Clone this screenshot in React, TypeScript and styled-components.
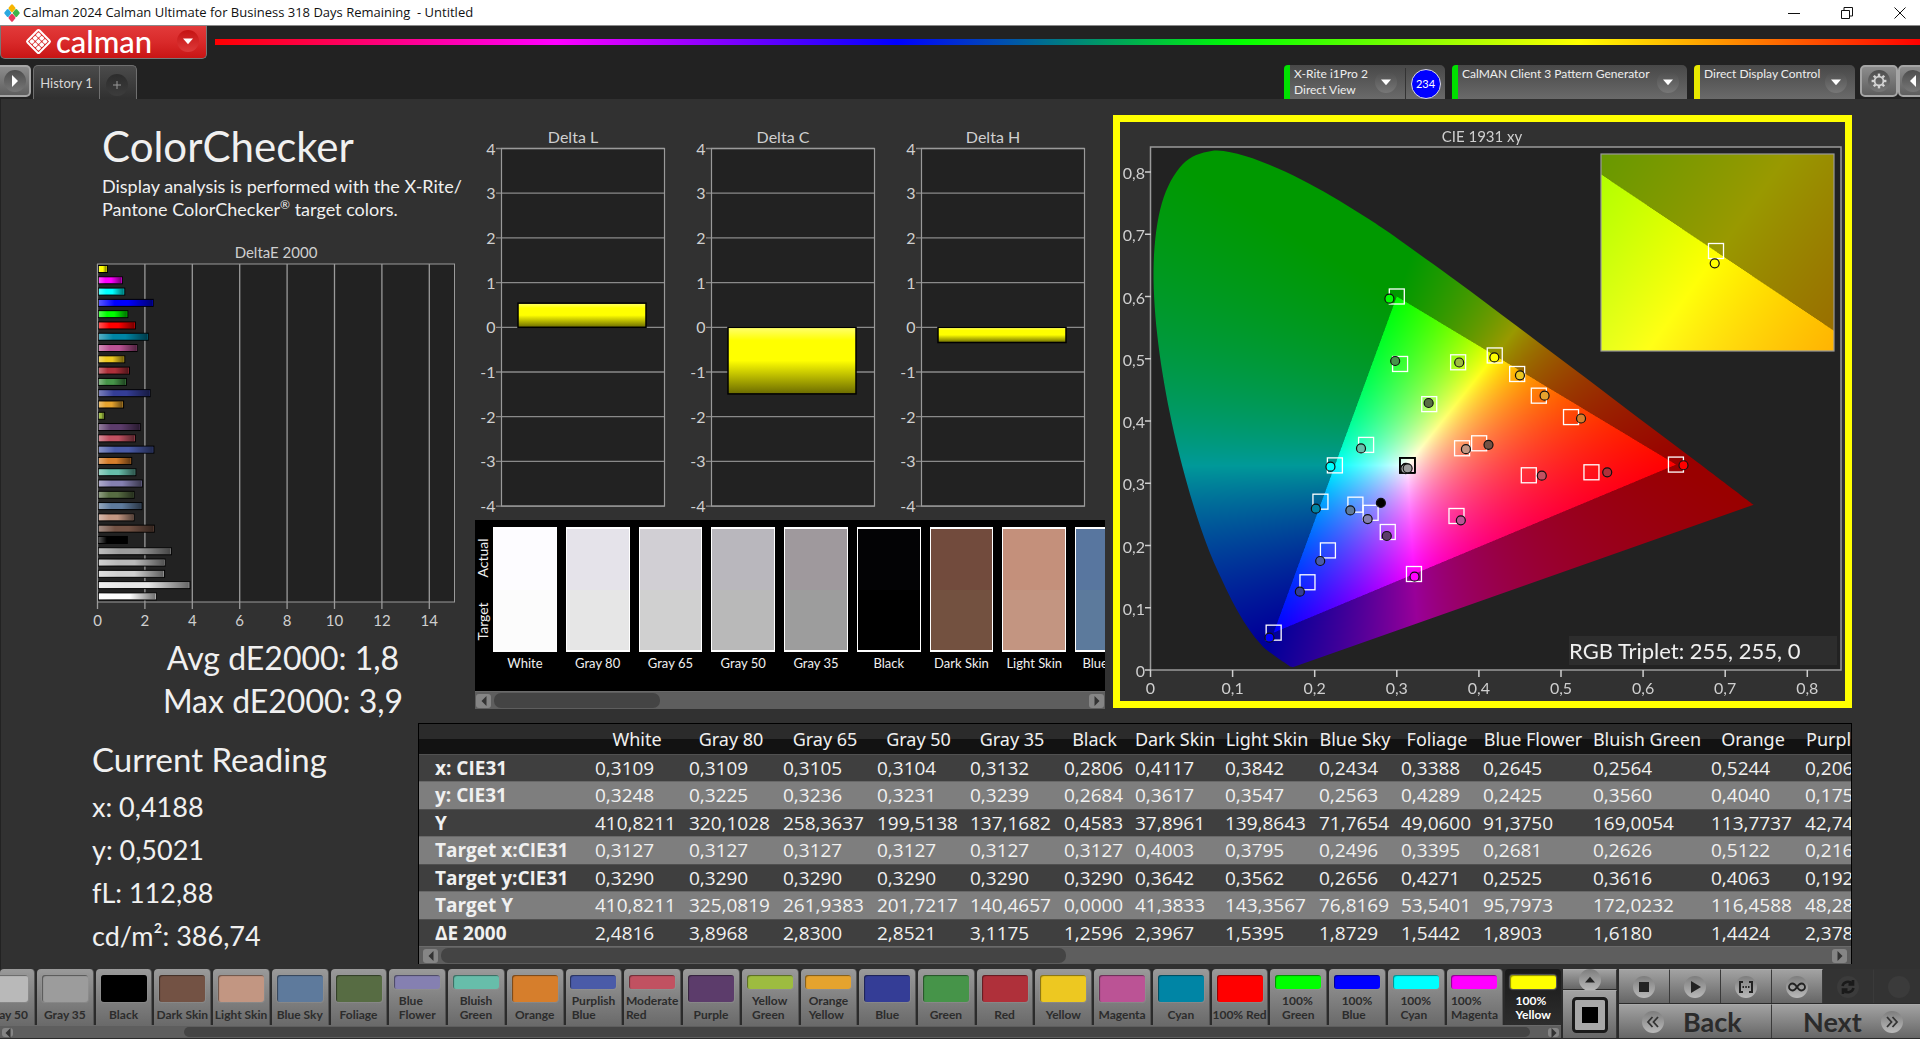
import React, { useLayoutEffect, useRef } from "react";
import styled, { createGlobalStyle, css } from "styled-components";

const GlobalStyle = createGlobalStyle`
  *, *::before, *::after { box-sizing: border-box; }
  body { margin: 0; background: #313131; font-family: Lato, "Open Sans", sans-serif; color: #f0f0f0; }
  button { font: inherit; color: inherit; padding: 0; margin: 0; border: 0; background: none; }
  h1, h2, p, figure { margin: 0; font-weight: 400; }
`;

/* ---------- data ---------- */

type Patch = {
  name: string;
  lines: string[];
  color: string;
  actual: [number, number];
  target: [number, number];
  dE: number;
};

const patch = (
  name: string,
  color: string,
  ax: number,
  ay: number,
  tx: number,
  ty: number,
  dE: number,
  lines: string[] = [name],
): Patch => ({ name, lines, color, actual: [ax, ay], target: [tx, ty], dE });

const patches: Patch[] = [
  patch("White", "#fdfdfd", 0.3109, 0.3248, 0.3127, 0.329, 2.4816),
  patch("Gray 80", "#e6e6e6", 0.3109, 0.3225, 0.3127, 0.329, 3.8968),
  patch("Gray 65", "#d0d0d0", 0.3105, 0.3236, 0.3127, 0.329, 2.83),
  patch("Gray 50", "#b9b9b9", 0.3104, 0.3231, 0.3127, 0.329, 2.8521),
  patch("Gray 35", "#9c9c9c", 0.3132, 0.3239, 0.3127, 0.329, 3.1175),
  patch("Black", "#000000", 0.2806, 0.2684, 0.3127, 0.329, 1.2596),
  patch("Dark Skin", "#735244", 0.4117, 0.3617, 0.4003, 0.3642, 2.3967),
  patch("Light Skin", "#c29682", 0.3842, 0.3547, 0.3795, 0.3562, 1.5395),
  patch("Blue Sky", "#5e7a9c", 0.2434, 0.2563, 0.2496, 0.2656, 1.8729),
  patch("Foliage", "#576c43", 0.3388, 0.4289, 0.3395, 0.4271, 1.5442),
  patch("Blue Flower", "#8580b1", 0.2645, 0.2425, 0.2681, 0.2525, 1.8903, ["Blue", "Flower"]),
  patch("Bluish Green", "#67bdaa", 0.2564, 0.356, 0.2626, 0.3616, 1.618, ["Bluish", "Green"]),
  patch("Orange", "#d67e2c", 0.5244, 0.404, 0.5122, 0.4063, 1.4424),
  patch("Purplish Blue", "#4a5ba8", 0.2067, 0.1751, 0.2161, 0.1921, 2.378, ["Purplish", "Blue"]),
  patch("Moderate Red", "#c15161", 0.4766, 0.3121, 0.4608, 0.3128, 1.6, ["Moderate", "Red"]),
  patch("Purple", "#5c3c6b", 0.2878, 0.2153, 0.289, 0.2217, 1.8),
  patch("Yellow Green", "#9dbc40", 0.376, 0.494, 0.3747, 0.4943, 0.3, ["Yellow", "Green"]),
  patch("Orange Yellow", "#e5a32e", 0.48, 0.4407, 0.473, 0.4407, 1.1, ["Orange", "Yellow"]),
  patch("Blue", "#343d96", 0.1819, 0.1259, 0.1912, 0.1409, 2.22),
  patch("Green", "#469449", 0.298, 0.4964, 0.304, 0.4916, 1.22),
  patch("Red", "#af303a", 0.5563, 0.3176, 0.5371, 0.3176, 1.35),
  patch("Yellow", "#edc821", 0.45, 0.4734, 0.4466, 0.4755, 1.15),
  patch("Magenta", "#bb5395", 0.378, 0.2405, 0.3727, 0.2474, 1.67),
  patch("Cyan", "#0085a5", 0.2014, 0.2592, 0.207, 0.2704, 2.14),
  patch("100% Red", "#ff0000", 0.6492, 0.3289, 0.64, 0.33, 1.6),
  patch("100% Green", "#00ff00", 0.291, 0.5965, 0.3, 0.6, 1.28, ["100%", "Green"]),
  patch("100% Blue", "#0000ff", 0.1449, 0.0519, 0.15, 0.06, 2.35, ["100%", "Blue"]),
  patch("100% Cyan", "#00ffff", 0.2192, 0.3266, 0.2246, 0.3287, 1.15, ["100%", "Cyan"]),
  patch("100% Magenta", "#ff00ff", 0.3216, 0.15, 0.3209, 0.1542, 1.05, ["100%", "Magenta"]),
  patch("100% Yellow", "#ffff00", 0.4188, 0.5021, 0.4193, 0.5053, 0.42, ["100%", "Yellow"]),
];

const stripColors: [string, string, string][] = [
  ["White", "#fdfcff", "#fcfcfc"],
  ["Gray 80", "#e5e3ea", "#e6e6e6"],
  ["Gray 65", "#d1cfd4", "#d0d0d0"],
  ["Gray 50", "#b9b7bd", "#b9b9b9"],
  ["Gray 35", "#9f999d", "#9d9d9d"],
  ["Black", "#030305", "#000000"],
  ["Dark Skin", "#724b3d", "#735140"],
  ["Light Skin", "#c4907b", "#c39581"],
  ["Blue Sky", "#58769f", "#5c7a9c"],
];

const columns: [string, number][] = [
  ["White", 94], ["Gray 80", 94], ["Gray 65", 94], ["Gray 50", 93], ["Gray 35", 94],
  ["Black", 71], ["Dark Skin", 90], ["Light Skin", 94], ["Blue Sky", 82], ["Foliage", 82],
  ["Blue Flower", 110], ["Bluish Green", 118], ["Orange", 94], ["Purplish Blue", 124],
];

const rows: [string, string[]][] = [
  ["x: CIE31", ["0,3109", "0,3109", "0,3105", "0,3104", "0,3132", "0,2806", "0,4117", "0,3842", "0,2434", "0,3388", "0,2645", "0,2564", "0,5244", "0,2067"]],
  ["y: CIE31", ["0,3248", "0,3225", "0,3236", "0,3231", "0,3239", "0,2684", "0,3617", "0,3547", "0,2563", "0,4289", "0,2425", "0,3560", "0,4040", "0,1751"]],
  ["Y", ["410,8211", "320,1028", "258,3637", "199,5138", "137,1682", "0,4583", "37,8961", "139,8643", "71,7654", "49,0600", "91,3750", "169,0054", "113,7737", "42,7412"]],
  ["Target x:CIE31", ["0,3127", "0,3127", "0,3127", "0,3127", "0,3127", "0,3127", "0,4003", "0,3795", "0,2496", "0,3395", "0,2681", "0,2626", "0,5122", "0,2161"]],
  ["Target y:CIE31", ["0,3290", "0,3290", "0,3290", "0,3290", "0,3290", "0,3290", "0,3642", "0,3562", "0,2656", "0,4271", "0,2525", "0,3616", "0,4063", "0,1921"]],
  ["Target Y", ["410,8211", "325,0819", "261,9383", "201,7217", "140,4657", "0,0000", "41,3833", "143,3567", "76,8169", "53,5401", "95,7973", "172,0232", "116,4588", "48,2810"]],
  ["ΔE 2000", ["2,4816", "3,8968", "2,8300", "2,8521", "3,1175", "1,2596", "2,3967", "1,5395", "1,8729", "1,5442", "1,8903", "1,6180", "1,4424", "2,3781"]],
];

/* ---------- window title ---------- */

const TitleBar = styled.div`
  display: flex;
  align-items: center;
  height: 26px;
  padding-left: 4px;
  background: #fff;
  border-bottom: 1px solid #8a8a8a;
  color: #111;
  font: 13px/25px "Open Sans", sans-serif;
`;
const TitleText = styled.span`
  flex: 1;
  padding-left: 3px;
  white-space: pre;
`;
const WindowButton = styled.button`
  display: grid;
  place-items: center;
  width: 53px;
  height: 25px;
  padding-left: 13px;
`;

/* ---------- header ---------- */

const Header = styled.header`
  background: #222;
  overflow: hidden;
`;
const BrandRow = styled.div`
  display: flex;
  align-items: flex-start;
  gap: 8px;
  height: 39px;
`;
const BrandButton = styled.button`
  display: flex;
  align-items: center;
  width: 207px;
  height: 33px;
  padding: 0 7px 2px 24px;
  background: linear-gradient(#e23a3a, #d92a2a 50%, #c91515);
  border: 1px solid #777;
  border-top: 0;
  border-radius: 0 0 5px 5px;
  color: #fff;
`;
const BrandName = styled.span`
  flex: 1;
  padding-left: 4px;
  text-align: left;
  font: 500 31px/30px Lato, sans-serif;
`;
const Rainbow = styled.div`
  flex: 1;
  height: 6px;
  margin-top: 13px;
  background: linear-gradient(90deg, #f00, #f0f, #00f, #0f0, #ff0, #f00);
`;
const TabRow = styled.div`
  display: flex;
  height: 34px;
`;
const Spacer = styled.div`
  flex: 1;
`;
const Knob = styled.span<{ $tone?: "red" | "dark" | "flat" | "light" }>`
  display: grid;
  place-items: center;
  flex: none;
  width: 22px;
  height: 22px;
  border-radius: 50%;
  background: linear-gradient(#4d4d4d, #777);
  ${(p) => p.$tone === "red" && css`background: linear-gradient(#c51212, #dd3a3a);`}
  ${(p) => p.$tone === "dark" && css`background: linear-gradient(#2c2c2c, #3c3c3c);`}
  ${(p) => p.$tone === "flat" && css`background: #3b3b3b;`}
  ${(p) => p.$tone === "light" && css`background: linear-gradient(#7d7d7d, #bababa);`}
`;
const EdgeButton = styled.button<{ $side?: "left" | "right" }>`
  display: grid;
  place-items: center;
  flex: none;
  width: ${(p) => (p.$side === "left" ? 31 : p.$side === "right" ? 30 : 38)}px;
  height: 32px;
  background: linear-gradient(#8c8c8c, #5f5f5f);
  border: 2px solid #a5a5a5;
  border-radius: 5px;
  ${(p) => p.$side === "left" && css`border-left: 0; border-radius: 0 5px 5px 0;`}
  ${(p) => p.$side === "right" && css`margin-right: -8px;`}
`;
const Tab = styled.div`
  display: flex;
  margin-left: 2px;
  border: 1px solid #6f6f6f;
  border-bottom: 0;
  border-radius: 5px 5px 0 0;
  background: linear-gradient(#4b4b4b, #303030);
`;
const TabLabel = styled.button`
  width: 66px;
  border-right: 1px solid #6f6f6f;
  color: #d8d8d8;
  font-size: 13px;
`;
const TabAdd = styled.button`
  display: grid;
  place-items: center;
  width: 36px;
  padding: 4px 2px 0 0;
`;
const Device = styled.div<{ $width: number; $accent: string }>`
  display: flex;
  width: ${(p) => p.$width}px;
  margin-right: 7px;
  border-left: 6px solid ${(p) => p.$accent};
  border-radius: 4px 5px 0 0;
  background: linear-gradient(#484848, #6a6a6a);
  overflow: hidden;
  &:last-of-type { margin-right: 5px; }
`;
const DeviceMenu = styled.button`
  display: flex;
  flex: 1;
  padding: 1px 8px 0 4px;
  text-align: left;
  color: #eee;
  font-size: 12px;
  line-height: 16px;
  white-space: nowrap;
  ${Knob} { margin: 5px 0 0 auto; }
`;
const Meter = styled.div`
  display: grid;
  place-items: center;
  width: 40px;
  margin-top: 3px;
  border-left: 1px solid #333;
`;
const MeterCount = styled.span`
  display: grid;
  place-items: center;
  width: 30px;
  height: 30px;
  border: 1px solid #ddd;
  border-radius: 50%;
  background: #00f;
  color: #fff;
  font-size: 11px;
`;

/* ---------- workspace ---------- */

const Workspace = styled.main`
  padding-right: 68px;
  background: #313131;
  border-left: 1px solid #222;
`;
const UpperRow = styled.section`
  display: grid;
  grid-template-columns: 467px minmax(0, 637fr) minmax(0, 747fr);
  min-height: 624px;
`;
const Intro = styled.div`
  padding-top: 22px;
`;
const PageTitle = styled.h1`
  padding-left: 101px;
  font-size: 42px;
  line-height: 50px;
`;
const PageText = styled.p`
  margin-top: 4px;
  padding-left: 101px;
  font-size: 18px;
  line-height: 23px;
  white-space: nowrap;
`;
const Mark = styled.sup`
  font-size: 12px;
  line-height: 0;
`;
const Drawing = styled.svg`
  display: block;
  width: 100%;
  font-family: Lato, sans-serif;
`;
const BarFigure = styled.figure`
  margin-top: 19px;
`;
const Summary = styled.p`
  padding-left: 97px;
  text-align: center;
  font-size: 32px;
  line-height: 43px;
`;
const MiddleColumn = styled.div`
  display: flex;
  flex-direction: column;
  gap: 5px;
  padding: 16px 0 0;
`;
const DeltaRow = styled.div`
  display: grid;
  grid-template-columns: repeat(3, 1fr);
  padding-right: 7px;
`;
const Strip = styled.div`
  margin-left: 7px;
  background: #000;
`;
const StripBody = styled.div`
  display: flex;
  height: 171px;
  padding-top: 7px;
  overflow: hidden;
`;
const StripAxis = styled.div`
  display: flex;
  flex: none;
  flex-direction: column;
  width: 18px;
  height: 125px;
`;
const StripAxisLabel = styled.span`
  flex: 1;
  writing-mode: vertical-rl;
  transform: rotate(180deg);
  text-align: center;
  font-size: 14px;
  line-height: 16px;
`;
const Swatches = styled.div`
  display: flex;
  flex: 1;
  gap: 9px;
  min-width: 0;
  overflow: hidden;
`;
const SwatchItem = styled.div`
  flex: none;
  width: calc(100% * 4 / 39 + 1px);
  text-align: center;
  font-size: 13px;
  line-height: 22px;
  white-space: nowrap;
`;
const SwatchBox = styled.div<{ $actual: string; $target: string }>`
  height: 125px;
  border: 1px solid #fff;
  border-width: 2px 1px;
  background: linear-gradient(${(p) => p.$actual} 50%, ${(p) => p.$target} 50%);
`;

const Scroll = styled.div<{ $height: number; $pad: number }>`
  display: flex;
  align-items: center;
  height: ${(p) => p.$height}px;
  padding: 0 ${(p) => p.$pad}px;
  background: #5e5e5e;
  border-top: 1px solid #6a6a6a;
`;
const ScrollArrow = styled.button<{ $height: number }>`
  display: grid;
  place-items: center;
  flex: none;
  width: ${(p) => (p.$height > 14 ? 15 : 11)}px;
  height: ${(p) => p.$height - 4}px;
  border-radius: 3px;
  background: #858585;
`;
const ScrollTrack = styled.div`
  flex: 1;
  height: 100%;
  padding: 1px 3px;
`;
const ScrollThumb = styled.div<{ $start: number; $size: number }>`
  width: ${(p) => p.$size}%;
  height: 100%;
  margin-left: ${(p) => p.$start}%;
  border-radius: 7px;
  background: #444;
`;

const CieFrame = styled.figure`
  display: grid;
  align-self: start;
  margin: 16px 0 0 8px;
  border: 7px solid #ff0;
  background: #313131;
  & > * { grid-area: 1 / 1; min-width: 0; }
`;
const CieCanvas = styled.canvas`
  display: block;
  width: 100%;
`;

/* ---------- readings and data table ---------- */

const LowerRow = styled.section`
  display: grid;
  grid-template-columns: 417px minmax(0, 1fr);
  min-height: 246px;
`;
const Reading = styled.div`
  padding: 14px 0 0 91px;
`;
const ReadingTitle = styled.h2`
  font-size: 33px;
  line-height: 44px;
`;
const ReadingList = styled.div`
  margin-top: 4px;
  font-size: 27px;
  line-height: 43px;
`;
const TablePanel = styled.div`
  align-self: start;
  border: 1px solid #000;
  border-bottom: 0;
`;
const TableClip = styled.div`
  overflow: hidden;
`;
const DataTable = styled.table`
  width: 1505px;
  table-layout: fixed;
  border-collapse: collapse;
  font: 19px/24px "Open Sans", sans-serif;
  white-space: nowrap;
`;
const ColumnHead = styled.th`
  height: 30px;
  padding: 0;
  background: linear-gradient(#2b2b2b 50%, #121212 50%);
  font: 400 18px/24px "Noto Sans", sans-serif;
  text-align: center;
`;
const DataRow = styled.tr<{ $light: boolean }>`
  height: ${(p) => (p.$light ? 28 : 27)}px;
  background: ${(p) => (p.$light ? "#7e7e7e" : "#3f3f3f")};
  border-top: 1px solid ${(p) => (p.$light ? "#696969" : "#505050")};
`;
const RowHead = styled.th`
  padding: 0 0 0 16px;
  text-align: left;
  font-weight: 700;
`;
const Cell = styled.td`
  padding: 0 0 0 5px;
`;

/* ---------- bottom bar ---------- */

const Footer = styled.footer`
  display: flex;
  height: 70px;
  padding-bottom: 1px;
  background: #2b2b2b;
`;
const PatchPane = styled.div`
  flex: 1;
  min-width: 0;
`;
const PatchList = styled.div`
  display: flex;
  gap: 2px;
  height: 56px;
`;
const PatchButton = styled.button<{ $active?: boolean; $cut?: boolean }>`
  display: flex;
  flex: 1 1 0;
  flex-direction: column;
  align-items: center;
  min-width: 0;
  padding: 6px 0 3px;
  border-radius: 4px 4px 0 0;
  background: linear-gradient(#9a9a9a, #6a6a6a);
  border-right: 1px solid #555;
  color: #2c2c2c;
  font: 700 12px/14px Lato, sans-serif;
  white-space: nowrap;
  ${(p) => p.$cut && css`flex: 0 0 35px; overflow: hidden; align-items: flex-end; padding-right: 6px;`}
  ${(p) => p.$active && css`background: linear-gradient(#1a1a1a, #2d2d2d); border-right: 0; color: #fff;`}
`;
const PatchColor = styled.span<{ $color: string; $short: boolean }>`
  flex: none;
  width: 46px;
  height: ${(p) => (p.$short ? 14 : 27)}px;
  border-radius: 3px;
  background: ${(p) => p.$color};
  box-shadow: inset 1px 1px 1px rgba(0, 0, 0, 0.45), 0 0 1px 1px rgba(150, 150, 150, 0.5);
`;
const PatchLabel = styled.span`
  margin-top: auto;
  text-align: left;
  white-space: pre;
`;
const Panel = styled.button<{ $dim?: boolean; $height: number }>`
  display: flex;
  align-items: center;
  justify-content: center;
  height: ${(p) => p.$height}px;
  background: linear-gradient(#a2a2a2, #666);
  border-right: 1px solid #3a3a3a;
  border-top: 1px solid #aaa;
  color: #2b2b2b;
  ${(p) => p.$dim && css`background: #333; border-top-color: #333;`}
`;
const SideTools = styled.div`
  display: flex;
  flex-direction: column;
  gap: 1px;
  width: 54px;
  margin: 0 2px;
`;
const Transport = styled.div`
  display: grid;
  grid-template-columns: repeat(6, 51px);
  grid-template-rows: 34px 34px;
  row-gap: 1px;
  width: 301px;
  overflow: hidden;
`;
const NavButton = styled(Panel)<{ $inset: number }>`
  grid-column: span 3;
  justify-content: flex-start;
  gap: 19px;
  padding-left: ${(p) => p.$inset}px;
  font: 700 27px/30px Lato, sans-serif;
`;

/* ---------- pieces ---------- */

const Triangle = ({ dir, color = "#fff", size = 6 }: { dir: "up" | "down" | "left" | "right"; color?: string; size?: number }) => {
  const points = { down: "0,3 12,3 6,10", up: "0,9 12,9 6,2", left: "9,0 9,12 3,6", right: "3,0 3,12 9,6" }[dir];
  return (
    <svg width={size * 2} height={size * 2} viewBox="0 0 12 12" aria-hidden="true">
      <polygon points={points} fill={color} />
    </svg>
  );
};

const ScrollBar = ({ height, start, size, pad = 1 }: { height: number; start: number; size: number; pad?: number }) => (
  <Scroll $height={height} $pad={pad}>
    <ScrollArrow $height={height} aria-label="Scroll left"><Triangle dir="left" color="#333" size={5} /></ScrollArrow>
    <ScrollTrack><ScrollThumb $start={start} $size={size} /></ScrollTrack>
    <ScrollArrow $height={height} aria-label="Scroll right"><Triangle dir="right" color="#333" size={5} /></ScrollArrow>
  </Scroll>
);

const AppIcon = () => (
  <svg width="16" height="18" viewBox="1 1 18 18" preserveAspectRatio="none" aria-hidden="true">
    <g transform="rotate(45 10 10)">
      <rect x="3.5" y="3.5" width="6.3" height="6.3" rx="1.5" fill="#f7b500" />
      <rect x="10.2" y="3.5" width="6.3" height="6.3" rx="1.5" fill="#3db54a" />
      <rect x="3.5" y="10.2" width="6.3" height="6.3" rx="1.5" fill="#2aa9e0" />
      <rect x="10.2" y="10.2" width="6.3" height="6.3" rx="1.5" fill="#e8395b" />
    </g>
  </svg>
);

const BrandMark = () => (
  <svg width="27" height="27" viewBox="0 0 27 27" aria-hidden="true">
    <g transform="rotate(45 13.5 13.5)">
      <rect x="5" y="5" width="17" height="17" rx="1.5" fill="none" stroke="#fff" strokeWidth="2" />
      {[0, 1, 2].map((i) =>
        [0, 1, 2].map((j) => (
          <rect key={`${i}${j}`} x={6.9 + i * 4.6} y={6.9 + j * 4.6} width="4" height="4" rx="1" fill="#fff" />
        )),
      )}
    </g>
  </svg>
);

const GearIcon = () => (
  <svg width="16" height="16" viewBox="0 0 16 16" aria-hidden="true" fill="none" stroke="#d4d4d4">
    <circle cx="8" cy="8" r="4.4" strokeWidth="1.8" />
    {[0, 45, 90, 135, 180, 225, 270, 315].map((a) => (
      <line key={a} x1="8" y1="0.6" x2="8" y2="3" strokeWidth="2.4" transform={`rotate(${a} 8 8)`} />
    ))}
  </svg>
);

/* ---------- DeltaE 2000 bars ---------- */

const DeltaEChart = () => {
  const left = 96.5;
  const unit = 23.7;
  const bars = [...patches].reverse();
  return (
    <Drawing viewBox="0 0 467 396" role="img" aria-label="DeltaE 2000">
      <defs>
        <linearGradient id="shade" x1="0" x2="1" y1="0" y2="0">
          <stop offset="0" stopColor="#fff" stopOpacity="0.35" />
          <stop offset="0.3" stopColor="#fff" stopOpacity="0" />
          <stop offset="0.55" stopColor="#000" stopOpacity="0" />
          <stop offset="1" stopColor="#000" stopOpacity="0.55" />
        </linearGradient>
      </defs>
      <text x="275" y="18" fontSize="15" textAnchor="middle" fill="#cfcfcf">DeltaE 2000</text>
      <rect x={left} y="24" width="357" height="338" fill="#222" stroke="#9a9a9a" />
      {[0, 2, 4, 6, 8, 10, 12, 14].map((v) => (
        <g key={v}>
          <line x1={left + v * unit} x2={left + v * unit} y1="24" y2="369" stroke="#9a9a9a" strokeWidth="1.3" />
          <text x={left + v * unit} y="386" fontSize="15" textAnchor="middle" fill="#cfcfcf">{v}</text>
        </g>
      ))}
      {bars.map((b, i) => (
        <g key={b.name}>
          <rect x={left + 1} y={25.5 + i * 11.29} width={b.dE * unit - 1} height="7" fill={b.color} stroke="#000" />
          <rect x={left + 1} y={26 + i * 11.29} width={b.dE * unit - 2} height="6" fill="url(#shade)" />
        </g>
      ))}
    </Drawing>
  );
};

/* ---------- Delta L / C / H ---------- */

const DeltaChart = ({ title, value }: { title: string; value: number }) => {
  const unit = 44.7;
  const zero = 33.5 + 4 * unit;
  const top = value > 0 ? zero - value * unit : zero;
  return (
    <Drawing viewBox="0 0 210 400" role="img" aria-label={title}>
      <defs>
        <linearGradient id="yellowBar" x1="0" x2="0" y1="0" y2="1">
          <stop offset="0" stopColor="#ffff70" />
          <stop offset="0.2" stopColor="#ffff00" />
          <stop offset="0.5" stopColor="#ffff00" />
          <stop offset="1" stopColor="#6b6b00" />
        </linearGradient>
      </defs>
      <text x="105" y="28" fontSize="16" textAnchor="middle" fill="#cfcfcf">{title}</text>
      <rect x="33.5" y="33.5" width="163" height={8 * unit} fill="#222" />
      {[4, 3, 2, 1, 0, -1, -2, -3, -4].map((v) => (
        <g key={v}>
          <line x1="28" x2="196.5" y1={zero - v * unit} y2={zero - v * unit} stroke="#8a8a8a" strokeWidth="1.3" />
          <text x="27.5" y={zero - v * unit + 6} fontSize="16" textAnchor="end" fill="#cfcfcf">{v}</text>
        </g>
      ))}
      <rect x="33.5" y="33.5" width="163" height={8 * unit} fill="none" stroke="#9a9a9a" strokeWidth="1.2" />
      <rect x="50" y={top} width="128" height={Math.abs(value) * unit} fill="url(#yellowBar)" stroke="#000" strokeWidth="1.5" />
    </Drawing>
  );
};

/* ---------- CIE 1931 chromaticity ---------- */

const CIE_W = 725;
const CIE_H = 579;
const px = (x: number) => 30.5 + 821 * x;
const py = (y: number) => 548 - 622.5 * y;

const locus: [number, number][] = [
  [0.1741, 0.005], [0.1714, 0.0051], [0.1689, 0.0069], [0.1644, 0.0109], [0.1566, 0.0177], [0.144, 0.0297],
  [0.1355, 0.0399], [0.1241, 0.0578], [0.1096, 0.0868], [0.0913, 0.1327], [0.0687, 0.2007], [0.0454, 0.295],
  [0.0235, 0.4127], [0.0082, 0.5384], [0.0039, 0.6548], [0.0139, 0.7502], [0.0389, 0.812], [0.0743, 0.8338],
  [0.1142, 0.8262], [0.1547, 0.8059], [0.1929, 0.7816], [0.2296, 0.7543], [0.2658, 0.7243], [0.3016, 0.6923],
  [0.3731, 0.6245], [0.4441, 0.5547], [0.5125, 0.4866], [0.5752, 0.4242], [0.627, 0.3725], [0.6658, 0.334],
  [0.6915, 0.3083], [0.719, 0.2809], [0.7347, 0.2653],
];

const shade = (x: number, y: number): [number, number, number] => {
  const X = x / y;
  const Z = (1 - x - y) / y;
  const rgb = [
    3.2406 * X - 1.5372 - 0.4986 * Z,
    -0.9689 * X + 1.8758 + 0.0415 * Z,
    0.0557 * X - 0.204 + 1.057 * Z,
  ];
  const inside = rgb.every((c) => c >= 0);
  const peak = Math.max(...rgb);
  const level = inside ? 255 : 153;
  return rgb.map((c) => (Math.max(0, c) / peak) * level) as [number, number, number];
};

const inset = { x: 481, y: 32, w: 233, h: 197, cx: 0.4193, cy: 0.5053, span: 0.0525 };

const paintField = (
  ctx: CanvasRenderingContext2D,
  x0: number,
  y0: number,
  w: number,
  h: number,
  toXY: (i: number, j: number) => [number, number],
  clip?: () => void,
) => {
  const layer = document.createElement("canvas");
  layer.width = w;
  layer.height = h;
  const lctx = layer.getContext("2d")!;
  const image = lctx.createImageData(w, h);
  for (let j = 0; j < h; j++) {
    for (let i = 0; i < w; i++) {
      const sum = [0, 0, 0];
      for (const [di, dj] of [[0.25, 0.25], [0.75, 0.25], [0.25, 0.75], [0.75, 0.75]]) {
        const [x, y] = toXY(x0 + i + di, y0 + j + dj);
        const c = shade(x, Math.max(y, 0.001));
        for (let k = 0; k < 3; k++) sum[k] += c[k] / 4;
      }
      const o = (j * w + i) * 4;
      image.data[o] = sum[0];
      image.data[o + 1] = sum[1];
      image.data[o + 2] = sum[2];
      image.data[o + 3] = 255;
    }
  }
  lctx.putImageData(image, 0, 0);
  ctx.save();
  clip?.();
  ctx.drawImage(layer, x0, y0);
  ctx.restore();
};

const CieChart = () => {
  const ref = useRef<HTMLCanvasElement>(null);
  useLayoutEffect(() => {
    const ctx = ref.current?.getContext("2d");
    if (!ctx) return;
    ctx.fillStyle = "#222";
    ctx.fillRect(31, 25, 690, 523);
    paintField(ctx, 31, 26, 606, 522, (i, j) => [(i - 30.5) / 821, (548 - j) / 622.5], () => {
      ctx.beginPath();
      ctx.moveTo(px(locus[0][0]), py(locus[0][1]));
      for (let i = 0; i < locus.length - 1; i++) {
        const p0 = locus[Math.max(0, i - 1)];
        const p1 = locus[i];
        const p2 = locus[i + 1];
        const p3 = locus[Math.min(locus.length - 1, i + 2)];
        ctx.bezierCurveTo(
          px(p1[0] + (p2[0] - p0[0]) / 6), py(p1[1] + (p2[1] - p0[1]) / 6),
          px(p2[0] - (p3[0] - p1[0]) / 6), py(p2[1] - (p3[1] - p1[1]) / 6),
          px(p2[0]), py(p2[1]),
        );
      }
      ctx.closePath();
      ctx.clip();
    });
    paintField(ctx, inset.x, inset.y, inset.w, inset.h, (i, j) => [
      inset.cx + ((i - inset.x) / inset.w - 0.5) * inset.span,
      inset.cy - ((j - inset.y) / inset.h - 0.5) * inset.span,
    ]);
  }, []);

  return (
    <CieFrame>
      <CieCanvas ref={ref} width={CIE_W} height={CIE_H} />
      <Drawing viewBox={`0 0 ${CIE_W} ${CIE_H}`} role="img" aria-label="CIE 1931 xy">
        <text x="362" y="20" fontSize="15" textAnchor="middle" fill="#cfcfcf">CIE 1931 xy</text>
        <rect x="30.5" y="25" width="690.5" height="523" fill="none" stroke="#9a9a9a" strokeWidth="1.5" />
        {[0, 1, 2, 3, 4, 5, 6, 7, 8].map((v) => (
          <g key={v} fill="#cfcfcf" fontSize="16">
            <line x1={px(v / 10)} x2={px(v / 10)} y1="548" y2="555" stroke="#cfcfcf" strokeWidth="1.5" />
            <text x={px(v / 10)} y="572" textAnchor="middle">{v ? `0,${v}` : "0"}</text>
            <line x1="25" x2="31" y1={py(v / 10)} y2={py(v / 10)} stroke="#cfcfcf" strokeWidth="1.5" />
            <text x="25" y={py(v / 10) + 7} textAnchor="end">{v ? `0,${v}` : "0"}</text>
          </g>
        ))}
        {patches.map((p, i) => (
          <rect key={p.name} x={px(p.target[0]) - 7.5} y={py(p.target[1]) - 7.5} width="15" height="15" fill="none" stroke={i < 6 ? "#000" : "#fff"} strokeWidth="1.3" />
        ))}
        {patches.map((p) => (
          <circle key={p.name} cx={px(p.actual[0])} cy={py(p.actual[1])} r="4.5" fill={p.color} stroke="#111" strokeWidth="1.2" />
        ))}
        <rect x={inset.x} y={inset.y} width={inset.w} height={inset.h} fill="none" stroke="#9a9a9a" strokeWidth="1.2" />
        <rect x="588.5" y="121.5" width="15" height="15" fill="none" stroke="#fff" strokeWidth="1.3" />
        <circle cx="594.7" cy="141.3" r="4.5" fill="#ff0" stroke="#111" strokeWidth="1.2" />
        <rect x="449" y="514" width="268" height="29" fill="#2d2d2d" />
        <text x="449" y="537" fontSize="22" fill="#f0f0f0">RGB Triplet: 255, 255, 0</text>
      </Drawing>
    </CieFrame>
  );
};

/* ---------- page ---------- */

export default function App() {
  return (
    <>
      <GlobalStyle />
      <TitleBar>
        <AppIcon />
        <TitleText>{"Calman 2024 Calman Ultimate for Business 318 Days Remaining  - Untitled"}</TitleText>
        <WindowButton aria-label="Minimize"><svg width="12" height="12" stroke="#111"><path d="M0 6.5H12" /></svg></WindowButton>
        <WindowButton aria-label="Restore"><svg width="12" height="12" fill="none" stroke="#111"><path d="M.5 3.5h8v8h-8zM3 3V.5h8.5V9H9" /></svg></WindowButton>
        <WindowButton aria-label="Close"><svg width="12" height="12" stroke="#111"><path d="M.5 .5l11 11M11.5 .5l-11 11" /></svg></WindowButton>
      </TitleBar>

      <Header>
        <BrandRow>
          <BrandButton>
            <BrandMark />
            <BrandName>calman</BrandName>
            <Knob $tone="red"><Triangle dir="down" size={5} /></Knob>
          </BrandButton>
          <Rainbow />
        </BrandRow>
        <TabRow>
          <EdgeButton $side="left" aria-label="Expand"><Knob><Triangle dir="right" /></Knob></EdgeButton>
          <Tab>
            <TabLabel>History 1</TabLabel>
            <TabAdd aria-label="Add history"><Knob $tone="dark"><svg width="8" height="8" stroke="#999"><path d="M4 0V8M0 4H8" /></svg></Knob></TabAdd>
          </Tab>
          <Spacer />
          <Device $width={161} $accent="#00e000">
            <DeviceMenu>X-Rite i1Pro 2<br />Direct View<Knob><Triangle dir="down" size={5} /></Knob></DeviceMenu>
            <Meter><MeterCount>234</MeterCount></Meter>
          </Device>
          <Device $width={235} $accent="#00e000">
            <DeviceMenu>CalMAN Client 3 Pattern Generator<Knob><Triangle dir="down" size={5} /></Knob></DeviceMenu>
          </Device>
          <Device $width={161} $accent="#e8e800">
            <DeviceMenu>Direct Display Control<Knob><Triangle dir="down" size={5} /></Knob></DeviceMenu>
          </Device>
          <EdgeButton aria-label="Settings"><Knob><GearIcon /></Knob></EdgeButton>
          <EdgeButton $side="right" aria-label="Collapse"><Knob><Triangle dir="left" /></Knob></EdgeButton>
        </TabRow>
      </Header>

      <Workspace>
        <UpperRow>
          <Intro>
            <PageTitle>ColorChecker</PageTitle>
            <PageText>Display analysis is performed with the X-Rite/<br />Pantone ColorChecker<Mark>®</Mark> target colors.</PageText>
            <BarFigure><DeltaEChart /></BarFigure>
            <Summary>Avg dE2000: 1,8</Summary>
            <Summary>Max dE2000: 3,9</Summary>
          </Intro>
          <MiddleColumn>
            <DeltaRow>
              <DeltaChart title="Delta L" value={0.54} />
              <DeltaChart title="Delta C" value={-1.49} />
              <DeltaChart title="Delta H" value={-0.34} />
            </DeltaRow>
            <Strip>
              <StripBody>
                <StripAxis>
                  <StripAxisLabel>Actual</StripAxisLabel>
                  <StripAxisLabel>Target</StripAxisLabel>
                </StripAxis>
                <Swatches>
                  {stripColors.map(([name, actual, target]) => (
                    <SwatchItem key={name}>
                      <SwatchBox $actual={actual} $target={target} />
                      {name}
                    </SwatchItem>
                  ))}
                </Swatches>
              </StripBody>
              <ScrollBar height={18} start={0} size={28} />
            </Strip>
          </MiddleColumn>
          <CieChart />
        </UpperRow>

        <LowerRow>
          <Reading>
            <ReadingTitle>Current Reading</ReadingTitle>
            <ReadingList>
              <div>x: 0,4188</div>
              <div>y: 0,5021</div>
              <div>fL: 112,88</div>
              <div>cd/m²: 386,74</div>
            </ReadingList>
          </Reading>
          <TablePanel>
            <TableClip>
              <DataTable>
                <colgroup>
                  <col width={171} />
                  {columns.map(([name, width]) => <col key={name} width={width} />)}
                </colgroup>
                <thead>
                  <tr>
                    <ColumnHead />
                    {columns.map(([name]) => <ColumnHead key={name} scope="col">{name}</ColumnHead>)}
                  </tr>
                </thead>
                <tbody>
                  {rows.map(([label, cells], i) => (
                    <DataRow key={label} $light={i % 2 === 1}>
                      <RowHead scope="row">{label}</RowHead>
                      {cells.map((c, j) => <Cell key={j}>{c}</Cell>)}
                    </DataRow>
                  ))}
                </tbody>
              </DataTable>
            </TableClip>
            <ScrollBar height={18} start={0} size={45} pad={4} />
          </TablePanel>
        </LowerRow>
      </Workspace>

      <Footer>
        <PatchPane>
          <PatchList>
            {patches.slice(3).map((p) => (
              <PatchButton key={p.name} $cut={p.name === "Gray 50"} $active={p.name === "100% Yellow"}>
                <PatchColor $color={p.color} $short={p.lines.length > 1} />
                <PatchLabel>{p.lines.join("\n")}</PatchLabel>
              </PatchButton>
            ))}
          </PatchList>
          <ScrollBar height={13} start={11} size={88} pad={2} />
        </PatchPane>
        <SideTools>
          <Panel $height={20} aria-label="Expand panel"><Knob $tone="light"><Triangle dir="up" color="#222" size={5} /></Knob></Panel>
          <Panel $height={48} aria-label="Pattern window">
            <svg width="36" height="36" viewBox="0 0 36 36" aria-hidden="true">
              <rect x="1.5" y="1.5" width="33" height="33" rx="3" fill="#a8a8a8" stroke="#1a1a1a" strokeWidth="3" />
              <rect x="10" y="10" width="16" height="16" fill="#000" />
            </svg>
          </Panel>
        </SideTools>
        <Transport>
          <Panel $height={34} aria-label="Stop"><Knob $tone="light"><svg width="10" height="10"><rect width="10" height="10" fill="#222" /></svg></Knob></Panel>
          <Panel $height={34} aria-label="Play"><Knob $tone="light"><svg width="12" height="12"><path d="M2 0L12 6L2 12z" fill="#222" /></svg></Knob></Panel>
          <Panel $height={34} aria-label="Read series"><Knob $tone="light"><svg width="16" height="12" fill="none" stroke="#222" strokeWidth="2"><path d="M5 1H2V11H5M11 1H14V11H11M4.500 6H6M7.300 6h1.500M10 6h1.500" /></svg></Knob></Panel>
          <Panel $height={34} aria-label="Continuous"><Knob $tone="light"><svg width="18" height="10" fill="none" stroke="#222" strokeWidth="1.800"><path d="M9 5C7 2 5.800 1.500 4.500 1.500a3.500 3.500 0 0 0 0 7C5.800 8.500 7 8 9 5s3.200-3.500 4.500-3.500a3.500 3.500 0 0 1 0 7C12.200 8.500 11 8 9 5z" /></svg></Knob></Panel>
          <Panel $height={34} $dim aria-label="Refresh"><Knob $tone="flat"><svg width="16" height="16" viewBox="0 0 16 16" fill="none" stroke="#1a1a1a" strokeWidth="2.600"><path d="M2.500 7A5.600 5.600 0 0 1 12 4.500M13.500 9A5.600 5.600 0 0 1 4 11.500M13 1v4.500H8.500M3 15v-4.500h4.500" /></svg></Knob></Panel>
          <Panel $height={34} $dim aria-label="Record"><Knob $tone="flat" /></Panel>
          <NavButton $height={34} $inset={23}><Knob $tone="light"><svg width="14" height="12" fill="none" stroke="#333" strokeWidth="1.800"><path d="M6.500 1L2 6l4.500 5M12 1L7.500 6l4.500 5" /></svg></Knob>Back</NavButton>
          <NavButton $height={34} $inset={31}>Next<Knob $tone="light"><svg width="14" height="12" fill="none" stroke="#333" strokeWidth="1.800"><path d="M2 1l4.500 5L2 11M7.500 1L12 6l-4.500 5" /></svg></Knob></NavButton>
        </Transport>
      </Footer>
    </>
  );
}
